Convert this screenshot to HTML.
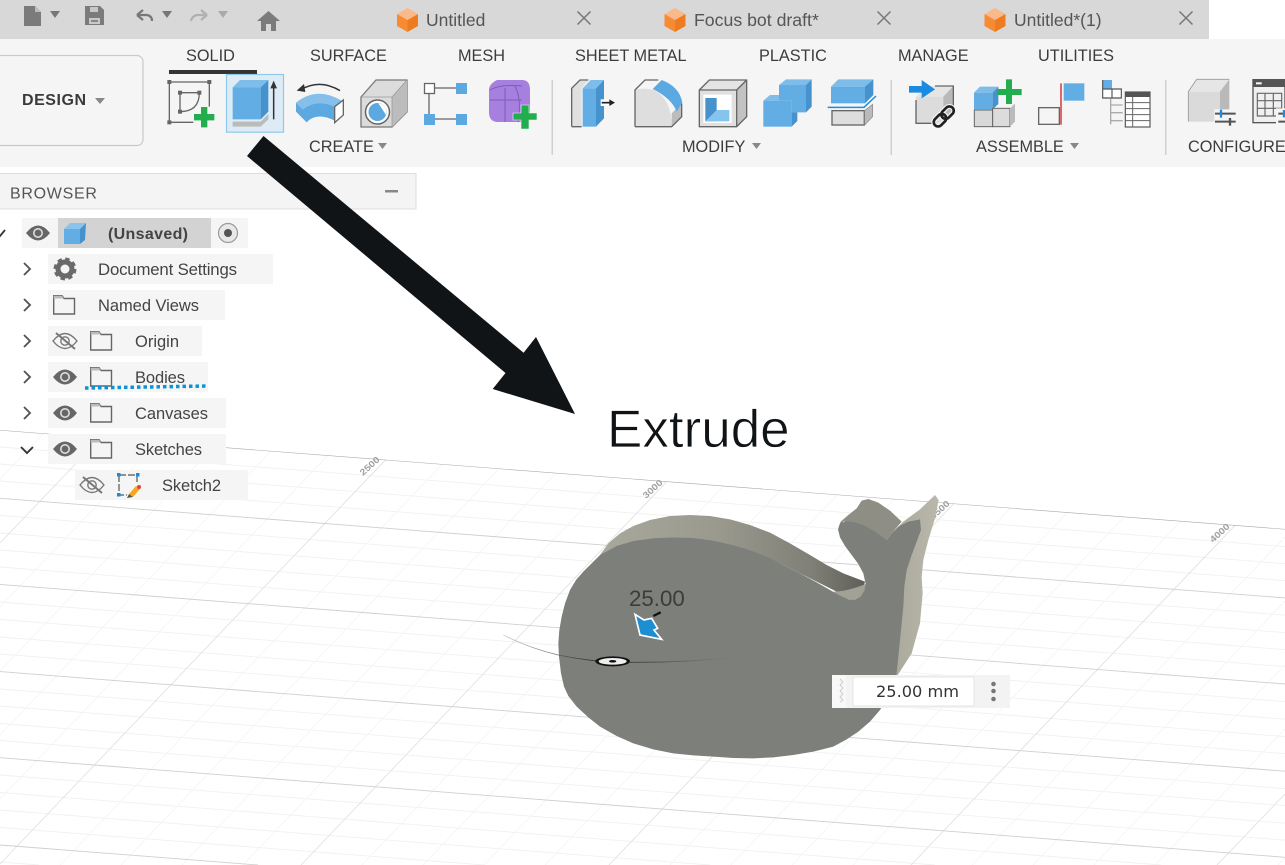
<!DOCTYPE html>
<html><head><meta charset="utf-8"><title>Extrude</title>
<style>
html,body{margin:0;padding:0;background:#fff;width:1285px;height:865px;overflow:hidden}
svg{display:block}
text{font-family:"Liberation Sans",sans-serif}
</style></head><body>
<svg width="1285" height="865" viewBox="0 0 1285 865" xmlns="http://www.w3.org/2000/svg">
<defs>
<clipPath id="cg"><polygon points="0,430 1285,529 1285,865 0,865"/></clipPath>
<linearGradient id="topg" x1="0" x2="1" y1="0" y2="0"><stop offset="0" stop-color="#a9a89c"/><stop offset=".45" stop-color="#9a998e"/><stop offset=".8" stop-color="#807f76"/><stop offset="1" stop-color="#5f5f58"/></linearGradient>
<linearGradient id="fin" x1="0" x2="1" y1="0" y2="0"><stop offset="0" stop-color="#a5a497"/><stop offset="1" stop-color="#b9b8ab"/></linearGradient>
<linearGradient id="ln" x1="0" x2="1"><stop offset="0" stop-color="#999" stop-opacity=".5"/><stop offset=".4" stop-color="#222"/><stop offset=".7" stop-color="#555"/><stop offset="1" stop-color="#777" stop-opacity="0"/></linearGradient>
<g id="eye"><path d="M-12 0Q0-15 12 0Q0 15-12 0Z" fill="#666"/><circle r="5" fill="#ddd"/><circle r="3.400" fill="#666"/></g>
<g id="eyeoff" fill="none" stroke="#777" stroke-width="1.400"><path d="M-12 0Q0-15 12 0Q0 15-12 0Z"/><circle r="4.200"/><path d="M-9-8L10 8" stroke-width="2"/></g>
<g id="folder"><path d="M.7 19V.7H9L11 3.500H21.500V19Z" fill="#f5f5f5" stroke="#666" stroke-width="1.400"/><path d="M.7 3.500V.7H9L11 3.500Z" fill="#bbb"/></g>
<path id="chev" d="M-3-6L3 0L-3 6" fill="none" stroke="#555" stroke-width="1.900"/>
<g id="cube"><polygon points="0,-12 10.500,-6 0,0 -10.500,-6" fill="#fab98a"/><polygon points="-10.500,-6 0,0 0,12 -10.500,6" fill="#f68b33"/><polygon points="10.500,-6 0,0 0,12 10.500,6" fill="#ee7b1f"/></g>
<g id="x"><path d="M-6.500-6.500L6.500 6.500M6.500-6.500L-6.500 6.500" stroke="#777" stroke-width="1.500"/></g>
</defs>

<rect width="1285" height="865" fill="#fff"/>

<!-- grid -->
<g clip-path="url(#cg)" fill="none">
<path stroke="#f1f1f1" stroke-width=".9" d="M0 447l1285 99.600M0 464l1285 99.600M0 481l1285 99.600M0 515.500l1285 99.600M0 533l1285 99.600M0 550l1285 99.600M0 567l1285 99.600M0 602l1285 99.600M0 619.500l1285 99.600M0 637l1285 99.600M0 654l1285 99.600M0 689l1285 99.600M0 706l1285 99.600M0 723.500l1285 99.600M0 740.500l1285 99.600M0 775l1161 90M0 792.500l935 72.500M0 810l710 55M0 827.500l484 37.500M0 862l39 3"/>
<path stroke="#f5f5f5" stroke-width=".9" d="M0 479L47 430M0 607L169 430M0 671L230 430M0 735L291 430M0 799L352 430M60 865L475 430M121 865L536 430M182 865L597 430M243 865L658 430M362 865L777 430M423 865L838 430M484 865L899 430M545 865L960 430M670 865L1085 430M731 865L1146 430M792 865L1207 430M853 865L1268 430M972 865L1285 537M1033 865L1285 601M1094 865L1285 665M1155 865L1285 729M1278 865L1285 858"/>
<path stroke="#e2e2e2" stroke-width=".9" d="M0 543L108 430M0 864L414 430M301 865L716 430M609 865L1024 430M911 865L1285 473M1217 865L1285 794"/>
<path stroke="#cfcfcf" stroke-width=".9" d="M0 498.300l1285 99.600M0 584.400l1285 99.600M0 671.600l1285 99.600M0 757.700l1285 99.600M0 845l258 20"/>
<path stroke="#a9a9a9" stroke-width="1.100" d="M0 430L1285 529"/>
</g>
<g fill="#a0a0a0" font-size="10.500" font-weight="bold">
<text transform="translate(363,476) rotate(-42) scale(1,.85)">2500</text>
<text transform="translate(646,499) rotate(-42) scale(1,.85)">3000</text>
<text transform="translate(933,520) rotate(-42) scale(1,.85)">3500</text>
<text transform="translate(1213,543) rotate(-42) scale(1,.85)">4000</text>
</g>

<!-- whale (coordinates in 3x space) -->
<g transform="translate(500,480) scale(.33333)">
<path d="M300 225L325 190L360 160L400 138L450 120L510 108L570 105L630 108L690 118L750 135L810 158L870 190L930 225L980 255L1030 280L1095 305L1085 345L1060 360L950 305L850 255L750 210L620 180L520 172L400 185Z" fill="url(#topg)"/>
<path d="M1000 335Q1040 335 1097 312Q1095 345 1070 360Q1035 362 1000 335Z" fill="#a2a196"/>
<path d="M1015 145L1022 125L1045 105L1070 85L1085 62L1105 57L1135 68L1170 92L1205 125L1175 160L1160 180L1060 125L1030 125Z" fill="#8f8e84"/>
<path d="M1175 160L1210 125L1260 88L1305 45L1316 60L1305 115L1285 180L1270 240L1265 290L1268 340L1260 430L1235 520L1190 590L1140 600L1200 300Z" fill="url(#fin)"/>
<path d="M300 225L350 198L400 183L460 175L520 172L580 174L640 182L700 196L750 210L800 230L850 255L900 280L950 307L990 330L1020 347L1045 358L1065 360L1082 350L1093 332L1097 312L1090 280L1075 252L1055 225L1035 198L1020 172L1014 148L1020 130L1038 124L1060 125L1090 135L1125 155L1160 180L1175 160L1195 140L1225 125L1260 118L1263 150L1250 185L1235 225L1220 270L1213 320L1210 380L1205 430L1200 480L1190 580L1170 640L1140 690L1110 725L1075 755L1040 778L1000 800L940 815L880 825L820 832L760 835L700 834L640 830L580 826L520 820L460 808L400 790L350 768L300 740L265 712L230 680L205 648L192 620L183 580L177 530L175 490L178 450L185 410L195 370L210 330L228 300L250 275L275 250Z" fill="#7d7f7a"/>
<path d="M10 465Q90 505 175 525Q230 536 290 543M390 547Q550 548 710 532" fill="none" stroke="url(#ln)" stroke-width="2.500"/>
<ellipse cx="338" cy="544" rx="52" ry="15" fill="#111"/><ellipse cx="338" cy="544" rx="42" ry="10" fill="#eee"/><ellipse cx="338" cy="544" rx="11" ry="4" fill="#111"/>
<polygon points="405,403 432,420 455,415 473,445 462,450 485,478 420,465" fill="#1c8fd2" stroke="#fff" stroke-width="5"/>
<path d="M460 408L482 397" stroke="#111" stroke-width="7"/>
</g>
<text x="629" y="606" font-size="22.300" fill="#3c3c3c">25.00</text>

<!-- input -->
<rect x="832" y="675" width="178" height="33" fill="#f3f3f3"/>
<rect x="832" y="675" width="14" height="33" fill="#f8f8f8"/>
<path d="M840 679l3 3-3 3 3 3-3 3 3 3-3 3 3 3-3 2" fill="none" stroke="#ccc" stroke-width="1"/>
<rect x="853" y="677" width="121" height="29" fill="#fff" stroke="#e6e6e6"/>
<text x="876" y="697" font-size="16.200" fill="#333" style="font-family:'DejaVu Sans',sans-serif">25.00 mm</text>
<circle cx="993.500" cy="684" r="2.300" fill="#777"/><circle cx="993.500" cy="691" r="2.300" fill="#777"/><circle cx="993.500" cy="699" r="2.300" fill="#777"/>

<!-- top bar -->
<rect x="0" y="0" width="1209" height="39" fill="#d8d8d8"/>
<rect x="0" y="39" width="1285" height="128" fill="#f5f5f5"/>
<path d="M24 6H35L41 12V26H24Z" fill="#7b7b7b"/><path d="M35 6L41 12H35Z" fill="#bbb"/>
<polygon points="50,11 60,11 55,18" fill="#777"/>
<path d="M85 6H100L104 10V25H85Z" fill="#7b7b7b"/><rect x="90" y="7" width="8" height="5" fill="#c8c8c8"/><rect x="89" y="18" width="11" height="6" fill="#c8c8c8"/><rect x="91" y="20" width="7" height="2" fill="#888"/>
<path d="M137 15L143 10M137 15L143 20M137 15H147Q152 16 152 21" fill="none" stroke="#777" stroke-width="2.200"/>
<polygon points="162,11 172,11 167,18" fill="#777"/>
<path d="M207 15L201 10M207 15L201 20M207 15H197Q192 16 191 21" fill="none" stroke="#b0b0b0" stroke-width="2.200"/>
<polygon points="218,11 228,11 223,18" fill="#aaa"/>
<path d="M257 21L268.500 11L280 21H276V31H271V24H266V31H261V21Z" fill="#7b7b7b"/>

<use href="#cube" x="407.500" y="20"/>
<text x="426" y="26" font-size="17.500" fill="#555">Untitled</text>
<use href="#x" x="584" y="18"/>
<use href="#cube" x="675" y="20"/>
<text x="694" y="26" font-size="17.700" fill="#555">Focus bot draft*</text>
<use href="#x" x="884" y="18"/>
<use href="#cube" x="995" y="20"/>
<text x="1014" y="26" font-size="17.500" fill="#555">Untitled*(1)</text>
<use href="#x" x="1186" y="18"/>

<!-- design -->
<rect x="-8" y="55.500" width="151" height="90" rx="6" fill="#f5f5f5" stroke="#c9c9c9" stroke-width="1.200"/>
<text x="22" y="105" font-size="16" font-weight="bold" fill="#3a3a3a" textLength="64">DESIGN</text>
<polygon points="95,98 105,98 100,104" fill="#888"/>

<!-- tabs -->
<g font-size="16.300" fill="#3c3c3c">
<text x="186" y="61">SOLID</text>
<text x="310" y="61">SURFACE</text>
<text x="458" y="61">MESH</text>
<text x="575" y="61">SHEET METAL</text>
<text x="759" y="61">PLASTIC</text>
<text x="898" y="61">MANAGE</text>
<text x="1038" y="61">UTILITIES</text>
<text x="309" y="152">CREATE</text>
<text x="682" y="152">MODIFY</text>
<text x="976" y="152">ASSEMBLE</text>
<text x="1188" y="152">CONFIGURE</text>
</g>
<rect x="169" y="70" width="88" height="4" fill="#333"/>
<polygon points="378,143 387,143 382.500,149" fill="#888"/>
<polygon points="752,143 761,143 756.500,149" fill="#888"/>
<polygon points="1070,143 1079,143 1074.500,149" fill="#888"/>
<rect x="551.500" y="80" width="1.500" height="75" fill="#cfcfcf"/>
<rect x="890.500" y="80" width="1.500" height="75" fill="#cfcfcf"/>
<rect x="1165" y="80" width="1.500" height="75" fill="#cfcfcf"/>

<!-- icons group 1 -->
<g transform="translate(160,70) scale(.33333)">
<g stroke="#666" stroke-width="4" fill="none"><path d="M28 36H148V110M28 36V157H100M60 68H118M60 68V125M60 125Q118 125 118 68"/></g>
<g fill="#666"><rect x="22" y="30" width="12" height="12"/><rect x="142" y="30" width="12" height="12"/><rect x="22" y="151" width="12" height="12"/><rect x="54" y="62" width="12" height="12"/><rect x="112" y="62" width="12" height="12"/><rect x="54" y="119" width="12" height="12"/></g>
<path d="M123 111h19v21h21v19h-21v21h-19v-21h-21v-19h21z" fill="#22ae4e"/>
<rect x="199.500" y="13.500" width="171" height="173" fill="#dcebf5" stroke="#8cc9ea" stroke-width="3.500"/>
<polygon points="218,52 240,30 325,30 302,52" fill="#7ebde9"/>
<rect x="218" y="52" width="84" height="96" fill="#62ade4"/>
<polygon points="302,52 325,30 325,125 302,148" fill="#4692cc"/>
<polygon points="218,155 302,155 325,132 325,148 302,170 218,170" fill="#bbb"/>
<path d="M341 52V148" stroke="#333" stroke-width="4.500"/><polygon points="331,55 341,32 351,55" fill="#333"/>
<path d="M420 60Q480 25 540 62" fill="none" stroke="#333" stroke-width="4.500"/><polygon points="410,62 432,42 436,66" fill="#333"/>
<path d="M408 98Q470 48 545 92L524 110Q470 85 428 118Z" fill="#86c0ea"/>
<path d="M408 98V125L440 157Q470 125 524 152V110Q470 85 428 118Z" fill="#5ca8e0"/>
<polygon points="524,110 550,90 550,135 524,158" fill="#fff" stroke="#666" stroke-width="4"/>
</g>
<!-- hole -->
<polygon points="361,97 376,80 407,80 407,112 392,127 361,127" fill="#dcdcdc" stroke="#777" stroke-width="1.300"/>
<polygon points="392,97 407,80 407,112 392,127" fill="#bcbcbc"/>
<path d="M361 97H392L407 80M392 97V127" fill="none" stroke="#999" stroke-width=".8"/>
<circle cx="377.500" cy="112" r="12" fill="#fff" stroke="#666" stroke-width="1.500"/>
<circle cx="377.500" cy="112" r="9" fill="#5ca8e0"/>
<path d="M378 103Q388 105 386 115Q381 107 378 103Z" fill="#fff"/>
<!-- constraint -->
<g stroke="#666" stroke-width="1.300" fill="none"><path d="M434 88H457M429 93V114M434 119H457"/><rect x="424.500" y="83.500" width="10" height="10" fill="#fff"/></g>
<g fill="#5ca8e0"><rect x="456" y="83" width="11" height="11"/><rect x="424" y="114" width="11" height="11"/><rect x="456" y="114" width="11" height="11"/></g>
<!-- form -->
<path d="M497 80H522Q530 80 530 90V110Q530 122 520 122H498Q489 122 489 112V90Q489 84 497 80Z" fill="#a77fdf"/>
<path d="M490 90Q500 84 522 86M490 100H522M505 88V122M515 86Q522 100 518 122" fill="none" stroke="#7d5cb8" stroke-width="1"/>
<path d="M521 105h8v8h8v7h-8v9h-8v-9h-8v-7h8z" fill="#22ae4e" stroke="#f5f5f5" stroke-width=".6"/>

<!-- modify icons -->
<g transform="translate(560,70) scale(.33333)">
<polygon points="35,55 60,30 85,30 65,55 65,170 35,170" fill="#e0e0e0"/>
<path d="M35 170V55L60 30H85M35 170H65" fill="none" stroke="#666" stroke-width="4"/>
<rect x="68" y="55" width="40" height="115" fill="#62ade4"/>
<polygon points="68,55 92,30 132,30 108,55" fill="#7ebde9"/>
<polygon points="108,55 132,30 132,145 108,170" fill="#4692cc"/>
<rect x="122" y="88" width="24" height="20" fill="#fff"/>
<path d="M125 98H150" stroke="#222" stroke-width="5"/><polygon points="148,88 165,98 148,108" fill="#222"/>
<path d="M225 60Q250 52 280 60Q335 85 335 170H225Z" fill="#dedede"/>
<polygon points="335,130 365,100 365,140 335,170" fill="#bcbcbc"/>
<path d="M225 170V60L255 30H295M225 170H335L365 140V100" fill="none" stroke="#666" stroke-width="4"/>
<path d="M278 57L305 30Q358 50 367 97L350 125Q335 85 278 57Z" fill="#5ba9e2"/>
<polygon points="418,60 448,30 560,30 530,60" fill="#e4e4e4"/>
<rect x="418" y="60" width="112" height="110" fill="#e0e0e0"/>
<polygon points="530,60 560,30 560,140 530,170" fill="#c2c2c2"/>
<path d="M418 60L448 30H560V140L530 170H418ZM418 60H530V170M530 60L560 30" fill="none" stroke="#666" stroke-width="4"/>
<rect x="430" y="74" width="85" height="85" fill="#fff"/>
<rect x="436" y="84" width="34" height="70" fill="#4692cc"/>
<polygon points="436,154 470,120 508,120 508,154" fill="#86c4f0"/>
<polygon points="657,45 678,28 755,28 738,45" fill="#7ebde9"/>
<path d="M657 45H738V127H695V92H657Z" fill="#62ade4"/>
<polygon points="738,45 755,28 755,110 738,127" fill="#4692cc"/>
<polygon points="610,92 630,75 657,75 657,92" fill="#7ebde9"/>
<rect x="610" y="92" width="85" height="78" fill="#62ade4"/>
<polygon points="695,127 712,127 712,153 695,170" fill="#4692cc"/>
<polygon points="813,50 835,28 940,28 915,50" fill="#7ebde9"/>
<rect x="813" y="50" width="102" height="50" fill="#62ade4"/>
<polygon points="915,50 940,28 940,75 915,100" fill="#4692cc"/>
<path d="M803 112H912L948 78" fill="none" stroke="#1d8fe0" stroke-width="4.500"/>
<rect x="816" y="122" width="97" height="43" fill="#dedede" stroke="#666" stroke-width="4"/>
<polygon points="914,122 938,103 938,140 914,165" fill="#bbb" stroke="#888" stroke-width="2"/>
</g>

<!-- assemble icons -->
<g transform="translate(900,70) scale(.33333)">
<polygon points="48,80 80,48 160,48 130,80" fill="#e5e5e5"/>
<rect x="48" y="80" width="82" height="80" fill="#dcdcdc"/>
<polygon points="130,80 160,48 160,130 130,160" fill="#b9b9b9"/>
<path d="M105 48H160V130M48 90V160H110" fill="none" stroke="#666" stroke-width="4"/>
<path d="M27 48H65V30L105 58L65 85V68H27Z" fill="#1b8be0"/>
<g transform="rotate(-45 132 140)" fill="none"><rect x="95" y="126" width="42" height="26" rx="13" stroke="#f5f5f5" stroke-width="15"/><rect x="127" y="126" width="42" height="26" rx="13" stroke="#f5f5f5" stroke-width="15"/><rect x="95" y="126" width="42" height="26" rx="13" stroke="#222" stroke-width="8"/><rect x="127" y="126" width="42" height="26" rx="13" stroke="#222" stroke-width="8"/></g>
<polygon points="222,68 240,50 295,50 278,68" fill="#7ebde9"/>
<rect x="222" y="68" width="56" height="50" fill="#62ade4"/>
<polygon points="278,68 295,50 295,102 278,118" fill="#4692cc"/>
<rect x="223" y="120" width="55" height="50" fill="#d8d8d8" stroke="#666" stroke-width="3"/>
<rect x="278" y="115" width="52" height="55" fill="#dcdcdc" stroke="#666" stroke-width="3"/>
<polygon points="330,115 345,100 345,155 330,170" fill="#bbb"/>
<path d="M318 28h18v29h29v18h-29v27h-18v-27h-26v-18h26z" fill="#22ae4e"/>
<rect x="416" y="113" width="62" height="50" fill="none" stroke="#666" stroke-width="4"/>
<path d="M483 40V164" stroke="#d5383b" stroke-width="4.500"/>
<rect x="491" y="40" width="62" height="52" fill="#62ade4"/>
<rect x="608" y="30" width="28" height="27" fill="#62ade4"/>
<path d="M608 57H664V84H608ZM636 57V84M608 30V57" fill="#fff" stroke="#555" stroke-width="3.500"/>
<path d="M632 85V163M632 105H668M632 128H668M632 152H668" fill="none" stroke="#aaa" stroke-width="4"/>
<rect x="676" y="66" width="74" height="105" fill="#fff" stroke="#555" stroke-width="3.500"/>
<rect x="676" y="66" width="74" height="15" fill="#555"/>
<path d="M676 98H750M676 116H750M676 134H750M676 152H750M698 81V171" stroke="#666" stroke-width="3"/>
<polygon points="865,65 890,28 988,28 960,65" fill="#e6e6e6"/>
<rect x="865" y="65" width="95" height="90" fill="#dadada"/>
<polygon points="960,65 988,28 988,125 960,155" fill="#b9b9b9"/>
<path d="M865 155V65L890 28H988" fill="none" stroke="#999" stroke-width="2.500"/>
<rect x="943" y="118" width="66" height="50" fill="#f5f5f5"/>
<path d="M945 131H1007M945 155H1007" stroke="#555" stroke-width="6"/>
<path d="M963 119V143" stroke="#1b8be0" stroke-width="7"/><path d="M990 144V167" stroke="#555" stroke-width="7"/>
<rect x="1059" y="29" width="96" height="129" fill="#f0f0f0" stroke="#555" stroke-width="4"/>
<rect x="1059" y="29" width="96" height="22" fill="#555"/><rect x="1068" y="37" width="17" height="6" fill="#fff"/>
<path d="M1072 70H1145V138H1072ZM1072 92H1145M1072 115H1145M1095 70V138M1120 70V138" fill="none" stroke="#666" stroke-width="3.500"/>
<rect x="1128" y="115" width="27" height="50" fill="#f5f5f5"/>
<path d="M1135 131H1155M1135 155H1155" stroke="#555" stroke-width="6"/><path d="M1152 120V142" stroke="#1b8be0" stroke-width="7"/>
</g>

<!-- browser -->
<rect x="-2" y="173.500" width="418" height="35.500" fill="#f4f4f4" stroke="#dedede"/>
<text x="10" y="198.500" font-size="16" fill="#555" letter-spacing=".7">BROWSER</text>
<rect x="385" y="190" width="13" height="2.500" fill="#888"/>

<rect x="22" y="218" width="226" height="30" fill="#f5f5f5"/>
<rect x="58" y="218" width="153" height="30" fill="#d3d3d3"/>
<rect x="48" y="254" width="225" height="30" fill="#f5f5f5"/>
<rect x="48" y="290" width="177" height="30" fill="#f5f5f5"/>
<rect x="48" y="326" width="154" height="30" fill="#f5f5f5"/>
<rect x="48" y="362" width="160" height="30" fill="#f5f5f5"/>
<rect x="48" y="398" width="178" height="30" fill="#f5f5f5"/>
<rect x="48" y="434" width="178" height="30" fill="#f5f5f5"/>
<rect x="75" y="470" width="173" height="30" fill="#f5f5f5"/>

<path d="M-4 232L0 236L5 230" fill="none" stroke="#333" stroke-width="1.800"/>
<use href="#eye" x="38" y="233"/>
<polygon points="64,229 70,223 86,223 80,229" fill="#8cc3ec"/>
<polygon points="64,229 80,229 80,244 64,244" fill="#62ade4"/>
<polygon points="80,229 86,223 85,240 80,244" fill="#4692cc"/>
<text x="108" y="239" font-size="16" font-weight="bold" fill="#444" textLength="80">(Unsaved)</text>
<circle cx="228" cy="233" r="9.500" fill="#e8e8e8" stroke="#999" stroke-width="1.200"/><circle cx="228" cy="233" r="4" fill="#555"/>

<use href="#chev" x="27" y="269"/>
<g transform="translate(65,269)"><circle r="7" fill="none" stroke="#6a6a6a" stroke-width="5"/><circle r="9.700" fill="none" stroke="#6a6a6a" stroke-width="3.500" stroke-dasharray="4.300 3.300"/></g>
<text x="98" y="275" font-size="16.800" fill="#444" textLength="139">Document Settings</text>

<use href="#chev" x="27" y="305"/>
<use href="#folder" x="53" y="295"/>
<text x="98" y="311" font-size="16.500" fill="#444" textLength="101">Named Views</text>

<use href="#chev" x="27" y="341"/>
<use href="#eyeoff" x="65" y="341"/>
<use href="#folder" x="90" y="331"/>
<text x="135" y="347" font-size="16.500" fill="#444" textLength="44">Origin</text>

<use href="#chev" x="27" y="377"/>
<use href="#eye" x="65" y="377"/>
<use href="#folder" x="90" y="367"/>
<text x="135" y="383" font-size="16.500" fill="#444" textLength="50">Bodies</text>
<path d="M85 388L208 386" stroke="#0a94d6" stroke-width="3.500" stroke-dasharray="3.500 3"/>

<use href="#chev" x="27" y="413"/>
<use href="#eye" x="65" y="413"/>
<use href="#folder" x="90" y="403"/>
<text x="135" y="419" font-size="16.500" fill="#444" textLength="73">Canvases</text>

<path d="M21 447L27 453L33 447" fill="none" stroke="#333" stroke-width="1.900"/>
<use href="#eye" x="65" y="449"/>
<use href="#folder" x="90" y="439"/>
<text x="135" y="455" font-size="16.500" fill="#444" textLength="67">Sketches</text>

<use href="#eyeoff" x="92" y="485"/>
<g>
<path d="M119 475H137M119 475V495H127M137 475V482" fill="none" stroke="#555" stroke-width="1.200" stroke-dasharray="7 2"/>
<rect x="117" y="473" width="3.500" height="3.500" fill="#1b8be0"/><rect x="136" y="473" width="3.500" height="3.500" fill="#1b8be0"/><rect x="117" y="493" width="3.500" height="3.500" fill="#1b8be0"/>
<path d="M129 494L136 486L140 489L133 497Z" fill="#f5a623"/><circle cx="139" cy="487" r="2" fill="#e8413c"/><path d="M129 494L127 498L133 497Z" fill="#555"/>
</g>
<text x="162" y="491" font-size="16.500" fill="#444" textLength="59">Sketch2</text>

<!-- annotation -->
<polygon points="263.500,136 247,156 505.500,373 492.700,389 575,414 536,337 523.600,352.700" fill="#111416"/>
<text x="607" y="447" font-size="53" fill="#111416" stroke="#fff" stroke-width=".7">Extrude</text>
</svg>
</body></html>
